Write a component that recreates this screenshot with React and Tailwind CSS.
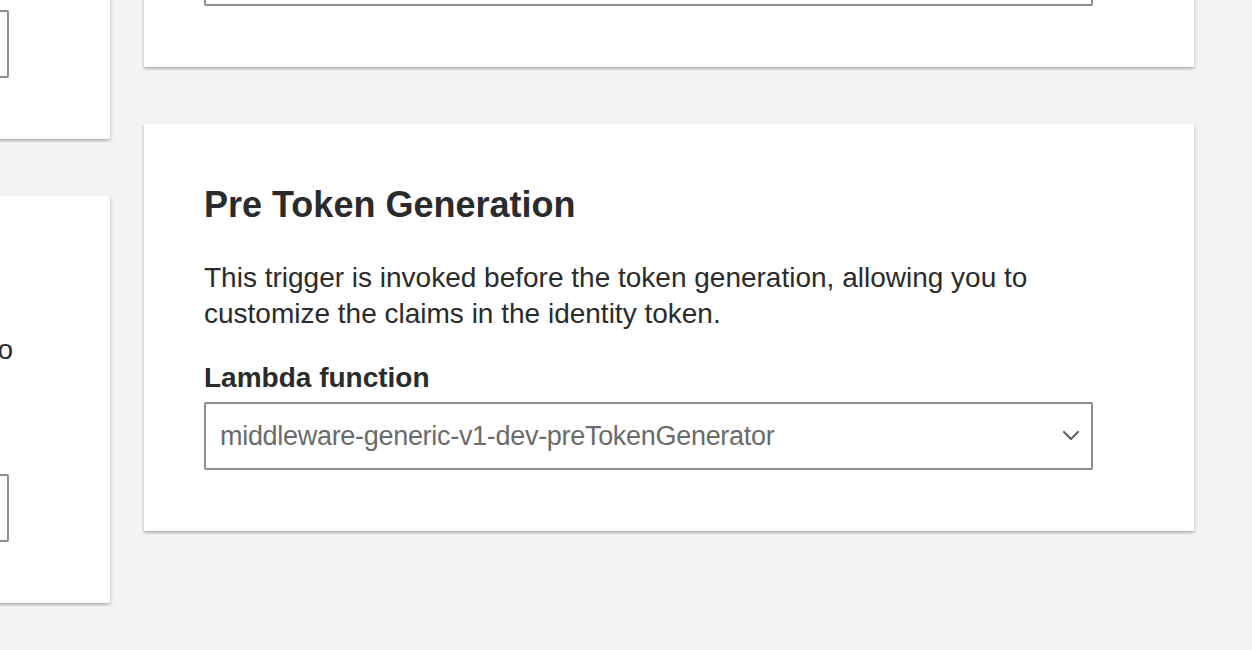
import React from 'react';

const font = { fontFamily: '"Liberation Sans", Arial, Helvetica, sans-serif' };

const Chevron = () => (
  <svg className="h-[12px] w-[18px]" viewBox="0 0 18 12" fill="none">
    <polyline points="2,2 9,9 16,2" stroke="#5f6368" strokeWidth="2.2" strokeLinecap="round" strokeLinejoin="round" />
  </svg>
);

const TriggerCard = ({ title, description, value, justify }) => (
  <div className="w-[1050px] bg-white pt-[61px] pr-[101px] pb-[61px] pl-[60px] shadow-[0_2px_2px_0_rgba(0,28,36,0.16),2px_2px_3px_0_rgba(0,28,36,0.07),-2px_2px_3px_0_rgba(0,28,36,0.07)]">
    <h2 className="text-[36px] leading-[40px] font-bold text-[#2b2b2b]">{title}</h2>
    <p className={`mt-[35px] text-[28px] leading-[36px] text-[#2b2b2b] ${justify ? 'text-justify -mr-1' : ''}`}>
      {description}
    </p>
    <div className="mt-[28px] text-[28px] leading-[36px] font-bold text-[#2b2b2b]">Lambda function</div>
    <div className="mt-[6px] flex h-[68px] items-center justify-between rounded-[2px] border-2 border-[#8a8f94] bg-white pl-[14px] pr-[11px]">
      <span className="text-[27px] leading-[36px] text-[#6b6b6b] tracking-[-0.3px]">{value}</span>
      <Chevron />
    </div>
  </div>
);

export default function App() {
  return (
    <div className="h-[650px] w-full overflow-hidden bg-[#f2f3f3]" style={font}>
      <div className="ml-[-940px] flex items-start gap-[34px]">
        <div className="mt-[-268px] flex flex-col gap-[57px]">
          <TriggerCard
            title="Verify Auth Challenge Response"
            description="This trigger is invoked to verify whether the response from the end user for a custom challenge is valid."
            value="None"
          />
          <TriggerCard
            title="User Migration"
            description="This trigger is invoked when a user is not found, allowing you to authenticate and migrate the user from an existing directory."
            value="None"
            justify
          />
        </div>
        <div className="mt-[-340px] flex flex-col gap-[57px]">
          <TriggerCard
            title="Create Auth Challenge"
            description="This trigger is invoked to create a challenge to present to the user during custom authentication."
            value="None"
          />
          <TriggerCard
            title="Pre Token Generation"
            description="This trigger is invoked before the token generation, allowing you to customize the claims in the identity token."
            value="middleware-generic-v1-dev-preTokenGenerator"
          />
        </div>
      </div>
    </div>
  );
}
